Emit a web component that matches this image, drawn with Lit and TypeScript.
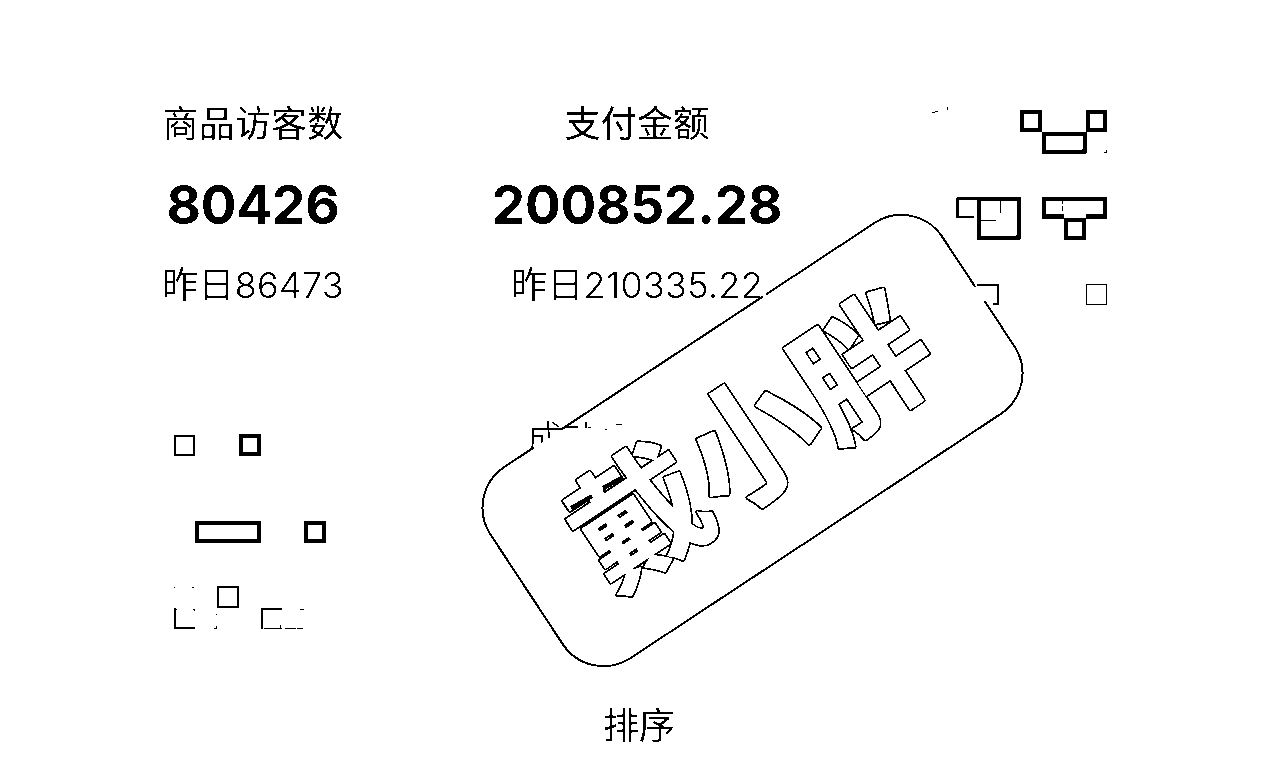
import { LitElement, html, svg, css } from "lit";
import { customElement } from "lit/decorators.js";

const metrics = [
  { label: "商品访客数", value: "80426", previous: "86473", cls: "visitors" },
  { label: "支付金额", value: "200852.28", previous: "210335.22", cls: "amount" },
];

/* x, y, width, height, stroke width */
const tiles = [
  [1022, 112, 18, 18, 4], [1088, 112, 17, 18, 4], [1044, 134, 40.5, 17.5, 4],
  [979, 199, 39.5, 38.5, 4], [1066, 220, 18, 18, 4],
  [1086.5, 284.5, 20, 20, 1], [175, 436, 19, 19, 2], [241, 436, 18, 18, 4],
  [197, 523, 62, 18, 4], [306, 523, 18, 18, 4], [218, 587, 20, 20, 2],
];

@customElement("app-root")
export class AppRoot extends LitElement {
  static styles = css`
    :host { display: block; }
    .page {
      position: relative; box-sizing: border-box; width: 1280px; height: 765px;
      padding: 97px 0 0; overflow: hidden; background: #fff; color: #000;
      font-family: Inter, "Noto Sans CJK SC", sans-serif;
      display: flex; flex-direction: column; justify-content: space-between;
      filter: url(#ink);
    }
    .metrics { display: grid; grid-template-columns: 506px 262px; }
    .metric { display: flex; flex-direction: column; align-items: center; white-space: nowrap; }
    .label { font-size: 36px; line-height: 54px; font-weight: 400; letter-spacing: 0.2px; }
    .value { font-size: 53px; line-height: 64px; font-weight: 650; letter-spacing: -0.2px; margin: 22px 0 20px; }
    .prev { font-size: 36px; line-height: 56px; font-weight: 330; letter-spacing: 0.3px; }
    .sort { font-size: 36px; line-height: 54px; margin: 0 0 12px 603px; font-weight: 400; }
    .overlay { position: absolute; inset: 0; width: 1280px; height: 765px; }
    .line { fill: none; stroke: #000; }
    .card { fill: #fff; stroke: #000; stroke-width: 2; }
    .gap { stroke: #fff; stroke-width: 6; }
    .small { font-size: 36px; font-weight: 300; }
    .name { font-family: "Noto Sans CJK SC", sans-serif; font-size: 134px; font-weight: 700; letter-spacing: 0.5px; stroke-linejoin: round; }
    .rim { fill: #000; stroke: #000; stroke-width: 4.4; }
    .face { fill: #fff; stroke: #fff; stroke-width: 0.9; }
  `;

  render() {
    return html`<div class="page">
      <div class="metrics">
        ${metrics.map(m => html`<div class="metric ${m.cls}">
          <div class="label">${m.label}</div>
          <div class="value">${m.value}</div>
          <div class="prev">昨日${m.previous}</div>
        </div>`)}
      </div>
      <div class="sort">排序</div>
      <svg class="overlay" viewBox="0 0 1280 765">
        <defs>
          <filter id="ink" x="0" y="0" width="100%" height="100%" color-interpolation-filters="sRGB">
            <feComponentTransfer>
              <feFuncR type="discrete" tableValues="0 1"/><feFuncG type="discrete" tableValues="0 1"/><feFuncB type="discrete" tableValues="0 1"/>
            </feComponentTransfer>
          </filter>
          <clipPath id="edge"><path d="M520 410H640V428L565 428L530 450H520Z"/></clipPath>
        </defs>
        <rect class="card" x="-270.5" y="-114.500" width="541" height="229" rx="49" transform="translate(752.5 440.5) rotate(-33.4)"/>
        <path class="gap" d="M534 448L561 430M975 287L984 301M764 297.500L767 295.500"/>
        <text class="small" x="527" y="452" clip-path="url(#edge)">成功</text>
        <g transform="translate(751 441) rotate(-33.7)">
          <text class="name rim" text-anchor="middle" x="0" y="50" aria-hidden="true">戴小胖</text>
          <text class="name face" text-anchor="middle" x="0" y="50">戴小胖</text>
        </g>
        <path class="line" stroke-width="4" d="M571 508L592 496M603 488L623 477"/>
        ${tiles.map(([x, y, w, h, s]) => svg`<rect class="line" x=${x} y=${y} width=${w} height=${h} stroke-width=${s}/>`)}
        <path class="line" stroke-width="4" d="M1064 216.500H1044V199H1105V216.500H1086"/>
        <path class="line" stroke-width="2" d="M977 198.500H957.500V217H974M977 285H998V304H993M175 608V628H195M282 609H262V629"/>
        <path class="line" stroke-width="1" d="M1000.500 200V213M980 220.500H996M1062.500 201V204M1062.500 206V211M932 112.500L938 111.500M947.500 107V110M1104 152.500H1106.500V150M174 587.500H175M192 587.500H194M174 609.500H177M193 609.500H195M194.500 609V611M216 614.500H217M214 628.500H216.500V626M264 628.500H282M280.500 625V628M285 628.500H296M297 628.500H303M300 609.500H304M588 427.500H591M605 429.500H607M616 424.500H622"/>
      </svg>
    </div>`;
  }
}
